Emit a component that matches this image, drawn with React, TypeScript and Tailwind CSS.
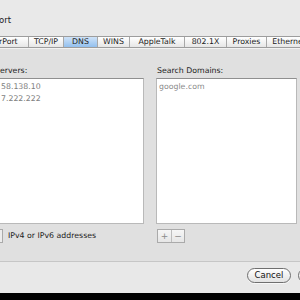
import React from "react";

const tabs = [
  { label: "rPort", w: "w-[29px]", justify: "justify-start" },
  { label: "TCP/IP", w: "w-[35px]" },
  { label: "DNS", w: "w-[34px]", active: true },
  { label: "WINS", w: "w-[32px]" },
  { label: "AppleTalk", w: "w-[55px]" },
  { label: "802.1X", w: "w-[42px]" },
  { label: "Proxies", w: "w-[40px]" },
  { label: "Ethernet", w: "w-[45px]" },
];

export default function App() {
  return (
    <div className="w-[300px] h-[300px] overflow-hidden bg-[#e0e0e0] flex flex-col font-['DejaVu_Sans',sans-serif] text-[7.8px] text-[#1c1c1c] leading-none">
      {/* Title strip */}
      <div className="h-[36px] bg-[#e9e9e9] flex items-start pt-[16px]">
        <span className="text-[8.5px] -ml-[1px]">ort</span>
      </div>

      {/* Segmented tabs */}
      <div className="h-[12px] bg-[linear-gradient(#e9e9e9_50%,#e0e0e0_50%)] flex">
        <div className="flex h-[12px] border-y border-[#9d9d9d] bg-[linear-gradient(#ffffff,#e6e6e6)] shadow-[0_1px_0_#f2f2f2] -ml-[1px]">
          {tabs.map((t, i) => (
            <div
              key={t.label}
              className={`${t.w} shrink-0 flex items-center ${t.justify ?? "justify-center"} ${
                i > 0 ? "border-l border-[#a8a8a8]" : ""
              } ${t.active ? "bg-[linear-gradient(#cfe3f8,#93c0ee)]" : ""} whitespace-nowrap overflow-hidden`}
            >
              {t.label}
            </div>
          ))}
        </div>
      </div>

      {/* Panel */}
      <div className="flex-1 flex flex-col">
        <div className="flex pt-[19px]">
          {/* DNS servers column */}
          <div className="w-[145px] -ml-[1px] flex flex-col">
            <div className="h-[11px] pl-[1px]">ervers:</div>
            <div className="h-[146px] bg-white border border-[#b9b9b9] border-t-[#8f8f8f] pt-[4px] pl-[1px] flex flex-col gap-[4px] text-[#7d7d7d]">
              <span>58.138.10</span>
              <span>7.222.222</span>
            </div>
            <div className="flex items-center mt-[5px] h-[14px]">
              <div className="w-[4px] h-[14px] bg-[#ececec] border border-l-0 border-[#aaaaaa]" />
              <span className="ml-[5px]">IPv4 or IPv6 addresses</span>
            </div>
          </div>

          {/* Search domains column */}
          <div className="w-[141px] ml-[12px] flex flex-col">
            <div className="h-[11px] pl-[1px]">Search Domains:</div>
            <div className="h-[146px] bg-white border border-[#b9b9b9] border-t-[#8f8f8f] pt-[4px] pl-[2px] text-[#8a8a8a]">
              google.com
            </div>
            <div className="flex mt-[5px] ml-[1px]">
              <div className="flex h-[14px] border border-[#aaaaaa] bg-[linear-gradient(#f6f6f6,#e6e6e6)] text-[#8a8a8a]">
                <div className="w-[13px] flex items-center justify-center text-[9px]">+</div>
                <div className="w-[13px] flex items-center justify-center border-l border-[#bdbdbd] text-[9px]">−</div>
              </div>
            </div>
          </div>
        </div>

        <div className="flex-1" />

        {/* Bottom button bar */}
        <div className="h-[32px] border-t border-[#c6c6c6] bg-[#e8e8e8] flex items-start pt-[6px] pl-[247px] gap-[7px]">
          <div className="w-[44px] h-[15px] shrink-0 rounded-full border border-[#6f6f6f] bg-[linear-gradient(#ffffff,#e2e2e2)] shadow-[0_1px_0_#f7f7f7] flex items-center justify-center text-[8.5px] text-[#111]">
            Cancel
          </div>
          <div className="w-[44px] h-[15px] shrink-0 rounded-full border border-[#6f6f6f] bg-[linear-gradient(#ffffff,#e2e2e2)]" />
        </div>
        <div className="h-[7px] bg-black" />
      </div>
    </div>
  );
}
